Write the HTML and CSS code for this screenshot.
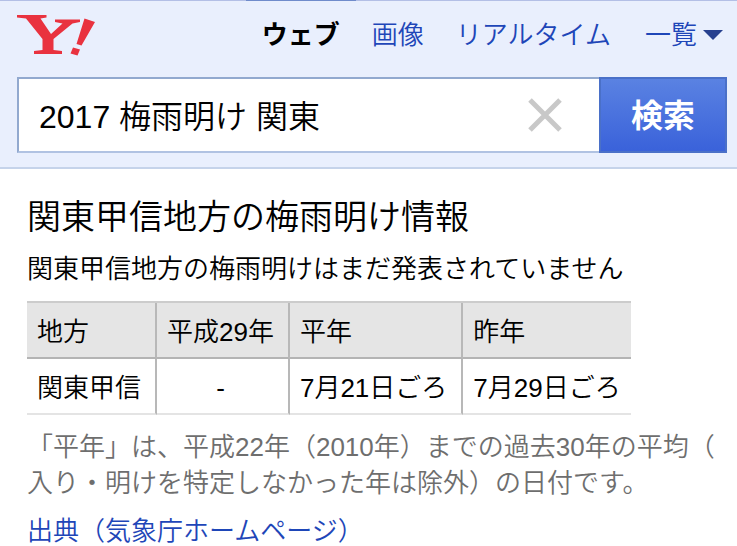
FILE: index.html
```
<!DOCTYPE html>
<html lang="ja">
<head>
    <meta charset="UTF-8">
    <meta name="viewport" content="width=device-width, initial-scale=1.0">
    <title>2017 梅雨明け 関東 - 検索</title>
    <link rel="stylesheet" href="styles.css">
</head>
<body>

<header class="header">
    <div class="topbar">
        <a class="logo" href="#" aria-label="Y!">
            <svg width="78" height="42" viewBox="17 14 78 42">
                <path fill="#e9323f" d="M17 15H46.500V17.500L40.500 18.500 51 34 62.500 23.500 55 22V19.500H80V22L72.500 23.500 53.500 39V50L62 51V54H34V51L42.500 50V39L26 18.500 17 17.500Z"/>
                <path fill="#e9323f" d="M84.500 18.500 95 22 81.500 45.500 76.500 44ZM73 47.500 80 49.500 77.500 55.500 70.500 53.500Z"/>
            </svg>
        </a>
        <nav class="tabs">
            <a class="tab active" href="#">ウェブ</a>
            <a class="tab" href="#">画像</a>
            <a class="tab" href="#">リアルタイム</a>
            <a class="tab more" href="#">一覧<span class="arrow"></span></a>
        </nav>
    </div>
    <form class="search">
        <div class="search-box">
            <input type="text" class="search-input" aria-label="検索キーワード" value="2017 梅雨明け 関東">
            <button type="reset" class="clear-btn" aria-label="クリア">
                <svg width="34" height="34" viewBox="0 0 34 34">
                    <path d="M2 2 32 32M32 2 2 32" stroke="#c8c8c8" stroke-width="5" fill="none"/>
                </svg>
            </button>
        </div>
        <button type="submit" class="search-btn">検索</button>
    </form>
</header>

<main class="content">
    <h1>関東甲信地方の梅雨明け情報</h1>
    <p class="status">関東甲信地方の梅雨明けはまだ発表されていません</p>
    <table class="season">
        <thead>
            <tr><th>地方</th><th>平成29年</th><th>平年</th><th>昨年</th></tr>
        </thead>
        <tbody>
            <tr><td>関東甲信</td><td class="none">-</td><td>7月21日ごろ</td><td>7月29日ごろ</td></tr>
        </tbody>
    </table>
    <p class="note">「平年」は、平成22年（2010年）までの過去30年の平均（<br>入り・明けを特定しなかった年は除外）の日付です。</p>
    <p class="source"><a href="#">出典（気象庁ホームページ）</a></p>
</main>

</body>
</html>
```

FILE: styles.css
```
body {
    margin: 0;
    background-color: #ffffff;
    color: #000000;
    font-family: "Liberation Sans", "Noto Sans CJK JP", sans-serif;
    font-size: 26px;
    font-weight: 350;
    line-height: 36px;
}
a {
    color: #1e46b8;
    text-decoration: none;
}
.header {
    background-color: #e9effd;
    border-top: 1px solid #b3bfe6;
    border-bottom: 2px solid #c5d3ea;
    padding: 0 10px 14px 17px;
}
.topbar {
    display: flex;
    justify-content: space-between;
    align-items: flex-start;
    height: 76px;
}
.logo svg {
    display: block;
    margin-top: 13px;
}
.tabs {
    display: flex;
}
.tab {
    padding: 16px 16px 0;
}
.tab.active {
    color: #000000;
    font-weight: 700;
    margin-top: -1px;
    border-top: 1px solid #6f8bcb;
}
.tab.more {
    display: flex;
    align-items: center;
    gap: 6px;
    padding: 16px 4px 0 18px;
}
.arrow {
    border: 10px solid transparent;
    border-top-color: #27408f;
    border-bottom: 0;
}
.search {
    display: flex;
    height: 76px;
}
.search-box {
    display: flex;
    align-items: center;
    flex: 1;
    background-color: #ffffff;
    border: 2px solid #b0c2e2;
    border-top-color: #92a9cf;
    border-left-color: #92a9cf;
    border-right: 0;
}
.search-input {
    flex: 1;
    min-width: 0;
    border: 0;
    padding: 4px 20px 0;
    background: none;
    color: #000000;
    font: inherit;
    font-size: 32px;
    outline: none;
}
.clear-btn {
    border: 0;
    padding: 0 37px 0 0;
    background: none;
    cursor: pointer;
}
.clear-btn svg {
    display: block;
}
.search-btn {
    width: 128px;
    padding: 2px 0 0;
    border: 2px solid #4a70c8;
    background: linear-gradient(#5a82e2, #3a62da);
    color: #ffffff;
    font: inherit;
    font-size: 32px;
    font-weight: 700;
    cursor: pointer;
}
.content {
    padding: 24px 20px 0 27px;
}
h1 {
    margin: 0;
    font-size: 34px;
    font-weight: 350;
    line-height: 48px;
}
.status {
    margin: 10px 0 14px;
}
.season {
    border-spacing: 0;
    border-top: 2px solid #cccccc;
    white-space: nowrap;
}
.season th,
.season td {
    height: 51px;
    padding: 3px 14px 0 10px;
    border-right: 2px solid #b8b8b8;
    border-bottom: 2px solid #e4e4e4;
    font-weight: 350;
    text-align: left;
}
.season th {
    background-color: #e5e5e5;
    border-bottom-color: #b4b4b4;
}
.season th:last-child,
.season td:last-child {
    padding-right: 10px;
    border-right: 0;
}
.season .none {
    text-align: center;
}
.note {
    margin: 14px 0 12px;
    color: #6e6e6e;
    white-space: nowrap;
}
.source {
    margin: 0;
}
```
